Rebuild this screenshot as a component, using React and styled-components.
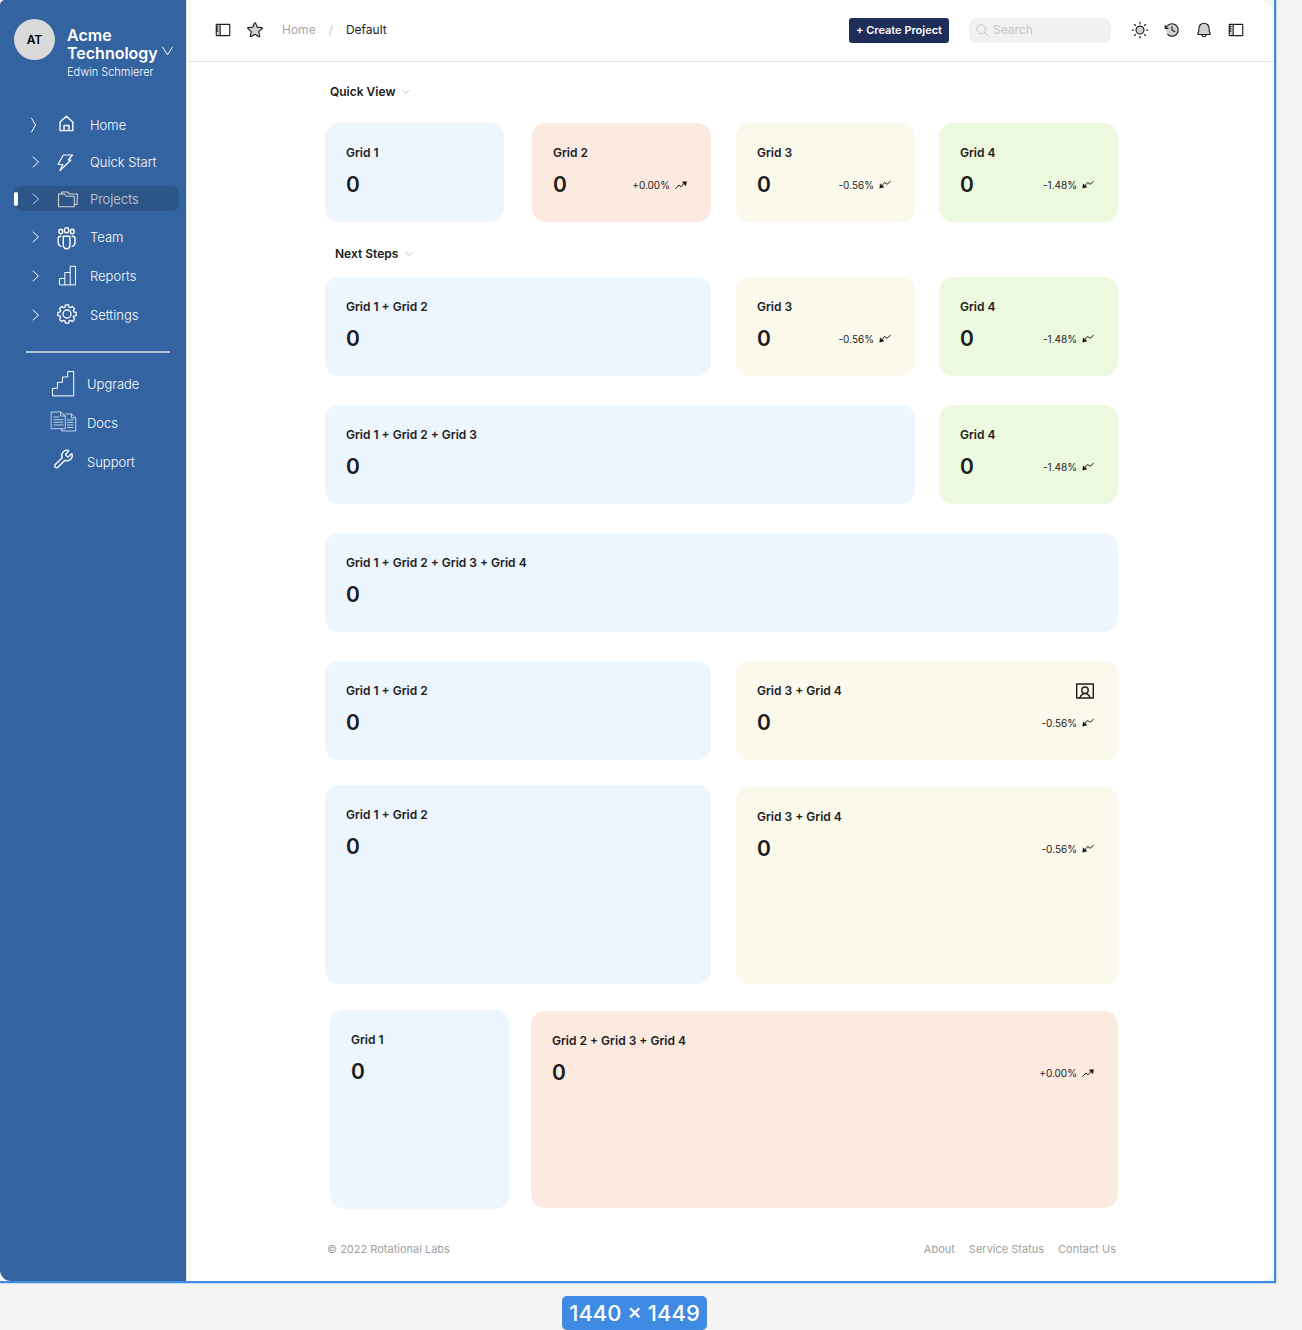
import React from "react";
import styled, { createGlobalStyle, css } from "styled-components";
import {
  PiBellDuotone,
  PiClockCounterClockwiseDuotone,
  PiMagnifyingGlass,
  PiSidebarDuotone,
  PiStarDuotone,
  PiSunDuotone,
} from "react-icons/pi";
import { Wrench } from "lucide-react";

const GlobalStyle = createGlobalStyle`
  *, *::before, *::after { box-sizing: border-box; }
  body {
    margin: 0;
    background: #f4f4f4;
    color: #1c1c1c;
    font-family: Inter, "Liberation Sans", sans-serif;
    font-size: 12px;
    line-height: 18px;
  }
  a { color: inherit; text-decoration: none; }
  h1, h2, h3, p, ul { margin: 0; padding: 0; font: inherit; }
  ul { list-style: none; }
  button, input { font: inherit; color: inherit; border: 0; margin: 0; }
  button { cursor: pointer; padding: 0; background: none; }
  svg { display: block; flex: none; overflow: visible; }
`;

/* ---------- canvas and frame ---------- */

const Canvas = styled.div`
  display: flex;
  flex-direction: column;
`;

const Selection = styled.div`
  margin-right: 26px;
  border: solid #3f8ae2;
  border-width: 0 2px 2px 0;
  box-shadow: 1px 1px 0 #c4daf5;
`;

const Frame = styled.div`
  display: flex;
  border-radius: 5px 14px 12px 11px;
  overflow: hidden;
  background: #ffffff;
`;

const SizeRow = styled.div`
  display: flex;
  justify-content: center;
  padding: 13px 33px 0 0;
`;

const SizeBadge = styled.span`
  padding: 0 7px;
  border-radius: 5px;
  background: #3f8ae2;
  color: #ffffff;
  font-size: 22px;
  font-weight: 500;
  line-height: 34px;
`;

/* ---------- sidebar ---------- */

const Sidebar = styled.aside`
  flex: none;
  width: 187px;
  padding: 19px 7px 0 14px;
  border-right: 1px solid #e4e8ee;
  background: #3363a0;
  background-clip: padding-box;
  color: #ffffff;
`;

const Account = styled.button`
  display: flex;
  align-items: flex-start;
  width: 100%;
  height: 93px;
  text-align: left;
`;

const Avatar = styled.span`
  flex: none;
  width: 41px;
  height: 41px;
  margin-right: 12px;
  border-radius: 50%;
  background: #d9d9d9;
  color: #000000;
  font-weight: 600;
  line-height: 41px;
  text-align: center;
`;

const AccountText = styled.span`
  display: flex;
  flex-direction: column;
  padding-top: 7px;
`;

const Company = styled.span`
  display: flex;
  align-items: flex-end;
  gap: 4px;
  font-size: 16px;
  font-weight: 600;

  svg { margin-bottom: 5px; }
`;

const Person = styled.span`
  font-size: 11px;
  font-weight: 300;
  line-height: 20px;
`;

const NavList = styled.ul`
  display: flex;
  flex-direction: column;
  gap: ${(p) => p.$gap}px;
  margin-top: ${(p) => p.$top || 0}px;
`;

const NavLink = styled.a`
  display: flex;
  align-items: center;
  height: 25px;
  border-radius: 8px;
  font-size: 13px;
  font-weight: 300;
  padding-left: ${(p) => (p.$secondary ? 36 : 0)}px;
  ${(p) =>
    p.$active &&
    css`
      background: #2c5688;
      color: #d3d3d3;
    `}
`;

const Marker = styled.span`
  width: 4px;
  height: 14px;
  margin-right: 12px;
  border-radius: 2px;
  background: ${(p) => (p.$active ? "#ffffff" : "transparent")};
`;

const NavIcon = styled.span`
  display: flex;
  margin: ${(p) => (p.$secondary ? "0 11px 0 0" : "0 11px 0 13px")};
`;

const Divider = styled.hr`
  height: 2px;
  margin: 24px 9px 0 12px;
  border: 0;
  background: #b5c4d6;
`;

/* ---------- top bar ---------- */

const Main = styled.div`
  flex: 1;
  min-width: 0;
  display: flex;
  flex-direction: column;
`;

const TopBar = styled.header`
  display: flex;
  align-items: center;
  height: 62px;
  padding: 0 28px 1px 26px;
  border-bottom: 1px solid #e4e4e4;
`;

const IconButton = styled.button`
  display: flex;
  align-items: center;
  justify-content: center;
  width: 20px;
  height: 20px;
`;

const IconGroup = styled.div`
  display: flex;
  gap: 12px;
`;

const Crumbs = styled.nav`
  display: flex;
  gap: 13px;
  margin-left: 17px;
  color: #a8a8a8;
`;

const Slash = styled.span`
  color: #cccccc;
`;

const Current = styled.span`
  color: #1c1c1c;
`;

const Actions = styled.div`
  display: flex;
  align-items: center;
  margin-left: auto;
`;

const CreateButton = styled.button`
  height: 25px;
  padding: 0 7px;
  border-radius: 3px;
  background: #1f2d5a;
  color: #ffffff;
  font-size: 11px;
  font-weight: 600;
`;

const SearchBox = styled.label`
  display: flex;
  align-items: center;
  gap: 4px;
  width: 142px;
  height: 25px;
  margin: 0 19px 0 20px;
  padding: 0 6px;
  border-radius: 7px;
  background: #f1f1f1;
  color: #c4c4c4;
`;

const SearchInput = styled.input`
  flex: 1;
  min-width: 0;
  padding: 0;
  background: transparent;
  outline: none;

  &::placeholder { color: #c4c4c4; opacity: 1; }
`;

/* ---------- cards ---------- */

const Content = styled.main`
  padding: 21px 156px 0 138px;
`;

const SectionTitle = styled.h2`
  display: flex;
  align-items: center;
  gap: 7px;
  height: ${(p) => p.$height}px;
  padding-left: ${(p) => p.$indent}px;
  font-size: 12px;
  font-weight: 600;
`;

const Rows = styled.div`
  display: flex;
  flex-direction: column;
  gap: ${(p) => p.$gap}px;
  margin-top: ${(p) => p.$top || 0}px;
`;

/* Four equal card columns; the odd tracks hold cards, the even ones are gutters. */
const Row = styled.div`
  display: grid;
  grid-template-columns:
    minmax(0, 1fr) 28px minmax(0, 1fr) 25px minmax(0, 1fr) 24px minmax(0, 1fr);
  align-items: ${(p) => p.$align || "start"};
`;

const OffsetRow = styled.div`
  display: grid;
  grid-template-columns: minmax(0, 179fr) minmax(0, 587fr);
  column-gap: 22px;
  align-items: center;
  padding-left: 5px;
`;

const tones = {
  blue: "#edf6ff",
  coral: "#fce9e0",
  cream: "#fbf8ec",
  green: "#ecf9df",
};

const CardBox = styled.section`
  ${(p) => p.$from && css`grid-column: ${p.$from * 2 - 1} / ${p.$to * 2};`}
  min-height: ${(p) => p.$height}px;
  padding: 21px 24px 21px 21px;
  border-radius: 14px;
  background: ${(p) => tones[p.$tone]};
`;

const CardHead = styled.div`
  display: flex;
  align-items: center;
  justify-content: space-between;
  height: 18px;
`;

const CardTitle = styled.h3`
  font-size: 12px;
  font-weight: 600;
`;

const CardBody = styled.div`
  display: flex;
  align-items: center;
  justify-content: space-between;
  height: 32px;
  margin-top: 7px;
`;

const Value = styled.p`
  font-size: 21px;
  font-weight: 600;
  line-height: 32px;
`;

const Trend = styled.p`
  display: flex;
  align-items: center;
  gap: 5px;
  font-size: 10px;
`;

/* ---------- footer ---------- */

const Footer = styled.footer`
  display: flex;
  justify-content: space-between;
  padding: 31px 2px 23px;
  color: #a0a0a0;
  font-size: 11px;
`;

const FooterLinks = styled.nav`
  display: flex;
  gap: 14px;
`;

/* ---------- icons ---------- */

const Icon = ({ size = 24, width = 1, children, ...rest }) => (
  <svg
    width={size}
    height={size}
    viewBox={`0 0 ${size} ${size}`}
    fill="none"
    stroke="currentColor"
    strokeWidth={width}
    strokeLinecap="round"
    strokeLinejoin="round"
    aria-hidden="true"
    {...rest}
  >
    {children}
  </svg>
);

const ChevronRight = ({ tall }) => (
  <Icon size={12}>
    <path d={tall ? "M1.5-1 5.5 6l-4 7" : "M3 1l5.5 5L3 11"} />
  </Icon>
);

const ChevronDown = ({ size, width }) => (
  <Icon size={size} width={width}>
    <path d={`M.5 ${size * 0.1}L${size / 2} ${size * 0.8} ${size - 0.5} ${size * 0.1}`} />
  </Icon>
);

const SmallChevron = () => (
  <Icon size={8} width={1} stroke="#c0c0c0">
    <path d="M1 2.5l3 3 3-3" />
  </Icon>
);

const HomeIcon = () => (
  <Icon width={1.4}>
    <path d="M5 9l6.400-5.800L17.800 9v8.600H5zM9 17.500v-5h5v5" />
  </Icon>
);

const BoltIcon = () => (
  <Icon width={1.2}>
    <path d="M8.3 5h9.2l-4.2 5H16L5 20.500l2.800-6H3z" />
  </Icon>
);

const FoldersIcon = () => (
  <Icon width={1.1}>
    <path d="M3.500 19.800V7h5.800l2 2.200h8v10.600z" />
    <path d="M6.500 7L7 5h5.500l2 2h8L22 17.500h-2.500" />
  </Icon>
);

const TeamIcon = () => (
  <Icon width={1.4}>
    <ellipse cx="5.800" cy="6.500" rx="1.900" ry="2.200" />
    <ellipse cx="11.600" cy="5.200" rx="2.200" ry="2.600" />
    <ellipse cx="17.300" cy="6.500" rx="1.900" ry="2.200" />
    <path d="M8.300 11.200h6.600v8.300c0 2.400-1.200 4.300-3.300 4.300s-3.300-1.900-3.300-4.300z" />
    <path d="M6 11.200c-2 0-2.800.6-2.800 2v4.300c0 2 1 3.300 2.800 3.800M17.200 11.200c2 0 2.800.6 2.800 2v4.300c0 2-1 3.300-2.800 3.800" />
  </Icon>
);

const ReportsIcon = () => (
  <Icon>
    <path d="M4.500 20.500v-6h5.300v-6h5.400v-6.200h5.300v18.200zM9.800 14.500v6M15.200 8.500v12" />
  </Icon>
);

const gearOutline = (() => {
  const points = [];
  for (let i = 0; i < 8; i += 1) {
    const mid = (i * Math.PI) / 4;
    [[-0.28, 7.2], [-0.17, 9.3], [0.17, 9.3], [0.28, 7.2]].forEach(([turn, r]) => {
      const x = 12 + r * Math.sin(mid + turn);
      const y = 11 - r * Math.cos(mid + turn);
      points.push(`${x.toFixed(2)} ${y.toFixed(2)}`);
    });
  }
  return `M${points.join("L")}Z`;
})();

const GearIcon = () => (
  <Icon width={1.3}>
    <path d={gearOutline} />
    <circle cx="12" cy="11" r="4" />
  </Icon>
);

const StairsIcon = () => (
  <Icon size={26}>
    <path d="M2.500 24.500v-7.200h5v-6h5V6h5.200V.5h6v24z" />
  </Icon>
);

const DocsIcon = () => (
  <Icon size={26} width={0.9} stroke="#cfdcec">
    <path d="M1.500 2h9.200l4.600 4v12.700H1.500zM10.700 2v4h4.600" />
    <path d="M15.300 4h6.400l4 4v13H11.500v-2.300M21.500 4v4h4.200" />
    <path d="M4 7h5M4 9.700h9M4 12.300h9M4 15h9M17.500 10h5.500M17.500 12.500h5.500M17.500 15h5.500M17.500 17.500h5.500" />
  </Icon>
);

const WrenchIcon = () => (
  <Icon size={26}>
    <g transform="translate(3 -.5)">
      <Wrench size={21} strokeWidth={1.5} />
    </g>
  </Icon>
);

const TrendUp = () => (
  <Icon size={12}>
    <path d="M.8 9.500l3.200-3.500 2 1.900L9.500 4" />
    <path d="M6.800 2.800l5-.6-.8 5z" fill="currentColor" stroke="none" />
  </Icon>
);

const TrendDown = () => (
  <Icon size={12}>
    <path d="M2.500 7.300L5.600 3.400l2.400 1.900 3.400-2.900" />
    <path d="M1 4.400l4.400 3.900L.4 9.400z" fill="currentColor" stroke="none" />
  </Icon>
);

const PortraitIcon = () => (
  <Icon size={18} width={1.4}>
    <path d="M.7 2h16.600v14H.7z" />
    <circle cx="9" cy="8.200" r="3.200" />
    <path d="M4 15.600c1-2.600 2.800-4.100 5-4.100s4 1.500 5 4.100" />
  </Icon>
);

/* ---------- parts ---------- */

const Card = ({ title, tone, from, to = from, height = 99, trend, down, action }) => (
  <CardBox $tone={tone} $from={from} $to={to} $height={height}>
    <CardHead>
      <CardTitle>{title}</CardTitle>
      {action}
    </CardHead>
    <CardBody>
      <Value>0</Value>
      {trend && (
        <Trend>
          {trend}
          {down ? <TrendDown /> : <TrendUp />}
        </Trend>
      )}
    </CardBody>
  </CardBox>
);

const NavItem = ({ label, icon, active, tall, secondary }) => (
  <li>
    <NavLink href="#" $active={active} $secondary={secondary} aria-current={active ? "page" : undefined}>
      {!secondary && (
        <>
          <Marker $active={active} />
          <ChevronRight tall={tall} />
        </>
      )}
      <NavIcon $secondary={secondary}>{icon}</NavIcon>
      {label}
    </NavLink>
  </li>
);

export default function App() {
  return (
    <Canvas>
      <GlobalStyle />
      <Selection>
        <Frame>
          <Sidebar>
            <Account type="button">
              <Avatar>AT</Avatar>
              <AccountText>
                <Company>
                  <span>
                    Acme
                    <br />
                    Technology
                  </span>
                  <ChevronDown size={11} width={1} />
                </Company>
                <Person>Edwin Schmierer</Person>
              </AccountText>
            </Account>
            <nav aria-label="Main">
              <NavList $gap={12}>
                <NavItem label="Home" icon={<HomeIcon />} tall />
                <NavItem label="Quick Start" icon={<BoltIcon />} />
                <NavItem label="Projects" icon={<FoldersIcon />} active />
              </NavList>
              <NavList $gap={14} $top={13}>
                <NavItem label="Team" icon={<TeamIcon />} />
                <NavItem label="Reports" icon={<ReportsIcon />} />
                <NavItem label="Settings" icon={<GearIcon />} />
              </NavList>
              <Divider />
              <NavList $gap={14} $top={18}>
                <NavItem label="Upgrade" icon={<StairsIcon />} secondary />
                <NavItem label="Docs" icon={<DocsIcon />} secondary />
                <NavItem label="Support" icon={<WrenchIcon />} secondary />
              </NavList>
            </nav>
          </Sidebar>

          <Main>
            <TopBar>
              <IconGroup>
                <IconButton type="button" aria-label="Toggle sidebar">
                  <PiSidebarDuotone size={18} />
                </IconButton>
                <IconButton type="button" aria-label="Favourite">
                  <PiStarDuotone size={18} />
                </IconButton>
              </IconGroup>
              <Crumbs aria-label="Breadcrumb">
                <a href="#">Home</a>
                <Slash>/</Slash>
                <Current>Default</Current>
              </Crumbs>
              <Actions>
                <CreateButton type="button">+ Create Project</CreateButton>
                <SearchBox>
                  <PiMagnifyingGlass size={14} aria-hidden="true" />
                  <SearchInput type="search" placeholder="Search" aria-label="Search" />
                </SearchBox>
                <IconGroup>
                  <IconButton type="button" aria-label="Theme">
                    <PiSunDuotone size={18} />
                  </IconButton>
                  <IconButton type="button" aria-label="History">
                    <PiClockCounterClockwiseDuotone size={18} />
                  </IconButton>
                  <IconButton type="button" aria-label="Notifications">
                    <PiBellDuotone size={18} />
                  </IconButton>
                  <IconButton type="button" aria-label="Toggle panel">
                    <PiSidebarDuotone size={18} />
                  </IconButton>
                </IconGroup>
              </Actions>
            </TopBar>

            <Content>
              <SectionTitle $height={18} $indent={5}>
                Quick View <SmallChevron />
              </SectionTitle>
              <Rows $gap={0} $top={22}>
                <Row>
                  <Card title="Grid 1" tone="blue" from={1} />
                  <Card title="Grid 2" tone="coral" from={2} trend="+0.00%" />
                  <Card title="Grid 3" tone="cream" from={3} trend="-0.56%" down />
                  <Card title="Grid 4" tone="green" from={4} trend="-1.48%" down />
                </Row>
              </Rows>

              <SectionTitle $height={64} $indent={10}>
                Next Steps <SmallChevron />
              </SectionTitle>
              <Rows $gap={29} $top={-9}>
                <Row>
                  <Card title="Grid 1 + Grid 2" tone="blue" from={1} to={2} />
                  <Card title="Grid 3" tone="cream" from={3} trend="-0.56%" down />
                  <Card title="Grid 4" tone="green" from={4} trend="-1.48%" down />
                </Row>
                <Row>
                  <Card title="Grid 1 + Grid 2 + Grid 3" tone="blue" from={1} to={3} />
                  <Card title="Grid 4" tone="green" from={4} trend="-1.48%" down />
                </Row>
                <Row>
                  <Card title="Grid 1 + Grid 2 + Grid 3 + Grid 4" tone="blue" from={1} to={4} />
                </Row>
                <Row>
                  <Card title="Grid 1 + Grid 2" tone="blue" from={1} to={2} />
                  <Card
                    title="Grid 3 + Grid 4"
                    tone="cream"
                    from={3}
                    to={4}
                    trend="-0.56%"
                    down
                    action={<PortraitIcon />}
                  />
                </Row>
              </Rows>
              <Rows $gap={26} $top={25}>
                <Row $align="end">
                  <Card title="Grid 1 + Grid 2" tone="blue" from={1} to={2} height={199} />
                  <Card title="Grid 3 + Grid 4" tone="cream" from={3} to={4} height={197} trend="-0.56%" down />
                </Row>
                <OffsetRow>
                  <Card title="Grid 1" tone="blue" height={199} />
                  <Card title="Grid 2 + Grid 3 + Grid 4" tone="coral" height={197} trend="+0.00%" />
                </OffsetRow>
              </Rows>

              <Footer>
                <p>© 2022 Rotational Labs</p>
                <FooterLinks aria-label="Footer">
                  <a href="#">About</a>
                  <a href="#">Service Status</a>
                  <a href="#">Contact Us</a>
                </FooterLinks>
              </Footer>
            </Content>
          </Main>
        </Frame>
      </Selection>
      <SizeRow>
        <SizeBadge>1440 × 1449</SizeBadge>
      </SizeRow>
    </Canvas>
  );
}
